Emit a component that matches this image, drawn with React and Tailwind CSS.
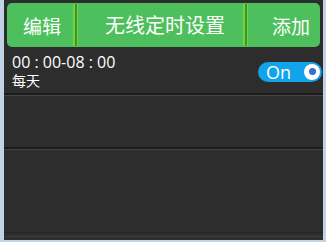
export default function App() {
  const font = { fontFamily: '"Noto Sans CJK SC", "Noto Sans", sans-serif' };

  const Divider = () => (
    <div className="flex h-[42px] w-[5px] items-stretch justify-center bg-[#72d23f]">
      <div className="w-[2px] bg-[#3c9425]" />
    </div>
  );

  return (
    <div className="flex h-[242px] w-[326px] bg-[#c3d3e6]" style={font}>
      <div className="ml-[4px] mr-[3px] mb-[2px] flex flex-1 flex-col bg-[#2d2d2d]">
        {/* header */}
        <div className="mx-[3px] mt-[3px] flex h-[44px] items-center rounded-[5px] bg-[#4dbf5c] text-white">
          <div className="flex w-[66px] justify-center pl-[4px] text-[19px] leading-none">编辑</div>
          <Divider />
          <div className="flex flex-1 justify-center pl-[9px] text-[20px] leading-none">无线定时设置</div>
          <Divider />
          <div className="flex w-[72px] justify-center pl-[14px] text-[19px] leading-none">添加</div>
        </div>

        {/* row 1 */}
        <div className="mt-[3px] flex h-[43px] items-center justify-between pl-[8px] pr-[1px]">
          <div className="flex flex-col gap-[3px] text-white">
            <span className="text-[16px] leading-[15px]" style={{ fontFamily: '"Open Sans", sans-serif' }}>00 : 00-08 : 00</span>
            <span className="text-[14px] leading-[15px]">每天</span>
          </div>
          <div className="flex h-[20px] w-[64px] items-center justify-between rounded-full bg-[#12a3ea] pl-[8px] pr-[2px]">
            <span className="text-[18px] leading-none text-white" style={{ fontFamily: '"Open Sans", sans-serif' }}>On</span>
            <div className="flex h-[16px] w-[16px] items-center justify-center rounded-full bg-white">
              <div className="h-[7px] w-[7px] rounded-full bg-[#3a6fd0]" />
            </div>
          </div>
        </div>
        <div className="h-[2px] bg-[#1b1b1b]" />
        <div className="h-[1px] bg-[#444444]" />

        {/* row 2 */}
        <div className="h-[51px]" />
        <div className="h-[2px] bg-[#1b1b1b]" />
        <div className="h-[1px] bg-[#444444]" />

        {/* row 3 */}
        <div className="flex-1" />
        <div className="h-[1px] bg-[#262626]" />
        <div className="h-[3px]" />
        <div className="h-[1px] bg-[#3e3e3e]" />
        <div className="h-[3px]" />
      </div>
    </div>
  );
}
